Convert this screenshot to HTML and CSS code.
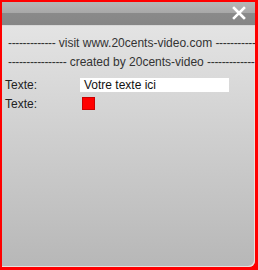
FILE: index.html
```html
<!DOCTYPE html>
<html>
<head>
<meta charset="utf-8">
<link rel="stylesheet" href="styles.css">
</head>
<body>
<div class="frame">
  <div class="panel">
    <div class="titlebar">
      <svg class="close" width="14" height="14" viewBox="0 0 14 14"><path d="M2 2 L12 12 M12 2 L2 12" stroke="#fff" stroke-width="2.6" stroke-linecap="square"/></svg>
    </div>
    <div class="content">
      <div class="banner"><span class="dash">-------------</span> visit www.20cents-video.com <span class="dash">-----------</span></div>
      <div class="banner"><span class="dash">----------------</span> created by 20cents-video <span class="dash">-------------</span></div>
      <div class="row first">
        <span class="label">Texte:</span>
        <div class="input">Votre texte ici</div>
      </div>
      <div class="row">
        <span class="label">Texte:</span>
        <div class="swatch"></div>
      </div>
    </div>
  </div>
</div>
</body>
</html>
```
FILE: styles.css
```css
html, body { margin: 0; padding: 0; }
body { width: 258px; height: 270px; overflow: hidden; font-family: "Liberation Sans", Arial, sans-serif; }
.frame {
  width: 258px; height: 270px; box-sizing: border-box;
  background: #f00;
  padding: 2px 3px 3px 2px;
}
.panel {
  height: 100%;
  display: flex; flex-direction: column;
  border-bottom-right-radius: 6px;
  overflow: hidden;
  box-shadow: inset -1px -1px 0 #e8e0dc;
  background: linear-gradient(#e8e8e8, #b7b7b7);
}
.titlebar {
  height: 23px; flex: none;
  background: linear-gradient(#b6b6b6 0, #a8a8a8 11px, #8a8a8a 11px, #868686 100%);
  border-bottom: 1px solid #d8d8d8;
  display: flex; justify-content: flex-end; align-items: center;
  padding-right: 9px;
}
.close { display: block; margin-top: -2px; }
.content { padding-top: 8px; color: #333; font-size: 12px; }
.banner { white-space: nowrap; line-height: 19px; padding-left: 6px; }
.dash { letter-spacing: -0.35px; }
.row { display: flex; align-items: center; height: 19px; padding-left: 3px; }
.row.first { margin-top: 3px; }
.label { width: 75px; flex: none; color: #222; }
.input { width: 145px; height: 14px; line-height: 14px; background: #fff; padding-left: 4px; color: #111; }
.swatch { width: 13px; height: 13px; background: #f00; margin-left: 2px; box-shadow: inset 0 0 0 1px #c00; }
```
